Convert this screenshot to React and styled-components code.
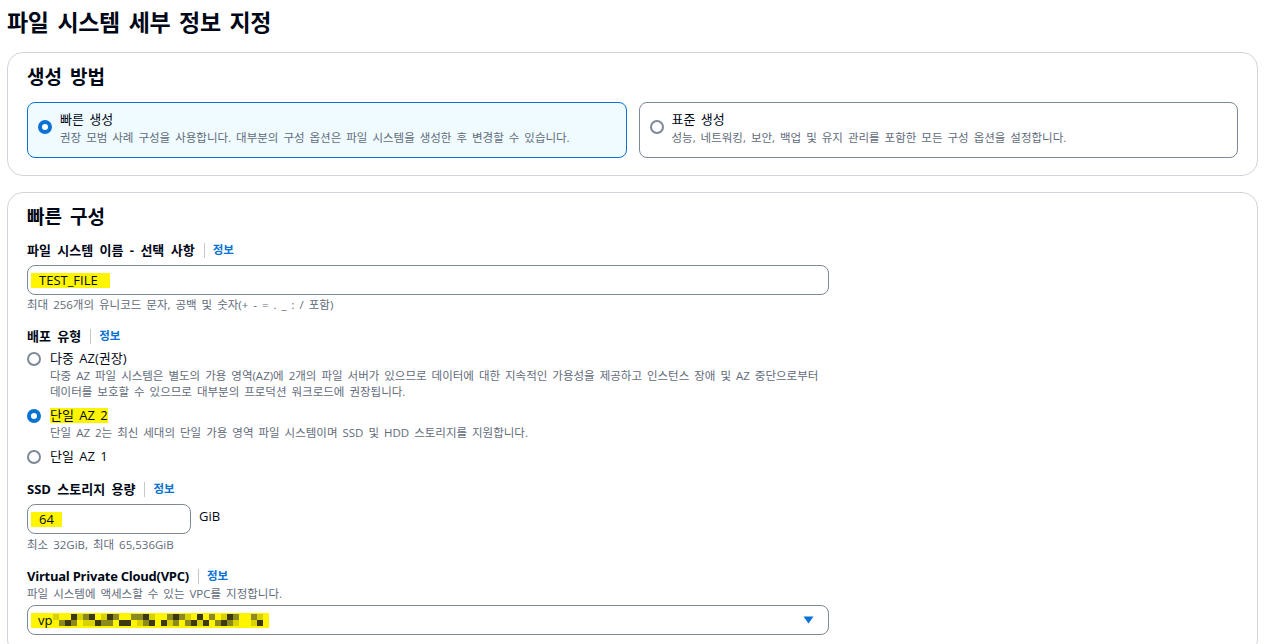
import React from 'react'
import styled, { createGlobalStyle } from 'styled-components'

const GlobalStyle = createGlobalStyle`
    body {
        margin: 0;
        background: #ffffff;
        font-family: "Open Sans", "Noto Sans CJK KR", sans-serif;
        color: #000716;
        word-spacing: 2px;
    }
`

const Page = styled.div`
    padding: 0 10px 0 7px;
    display: flex;
    flex-direction: column;
`

const Title = styled.h1`
    margin: 0;
    font-size: 23px;
    font-weight: 700;
    line-height: 28px;
    padding: 8px 0 16px 0;
    letter-spacing: -0.3px;
    word-spacing: 3px;
`

const Card = styled.section`
    border: 1px solid #d1d5db;
    border-radius: 16px;
    padding: ${({ $pad }) => $pad || '12px 19px 17px 19px'};
    margin-bottom: 16px;
    display: flex;
    flex-direction: column;
`

const CardHeading = styled.h2`
    margin: 0;
    font-size: 19px;
    font-weight: 700;
    line-height: 24px;
    word-spacing: 3px;
`

const TileRow = styled.div`
    display: grid;
    grid-template-columns: 1fr 1fr;
    gap: 12px;
    margin-top: 13px;
`

const Tile = styled.div`
    border: 1px solid ${({ $active }) => ($active ? '#0972d3' : '#7d8998')};
    background: ${({ $active }) => ($active ? '#f0fbff' : '#ffffff')};
    border-radius: 8px;
    padding: 6px 12px 11px 10px;
    display: flex;
    gap: 8px;
    align-items: flex-start;
`

const Radio = styled.span`
    flex: none;
    width: 14px;
    height: 14px;
    box-sizing: border-box;
    border-radius: 50%;
    margin-top: ${({ $top }) => $top || '4px'};
    border: ${({ $checked }) => ($checked ? '4px solid #0972d3' : '2px solid #7d8998')};
    background: #ffffff;
`

const OptionText = styled.div`
    display: flex;
    flex-direction: column;
`

const OptionLabel = styled.div`
    font-size: 13px;
    line-height: 20px;
`

const OptionDesc = styled.div`
    font-size: 11.5px;
    line-height: 16px;
    color: #5f6b7a;
    margin-top: ${({ $top }) => $top || '0'};
`

const Fields = styled.div`
    display: flex;
    flex-direction: column;
    gap: 13px;
    margin-top: 11px;
`

const Field = styled.div`
    display: flex;
    flex-direction: column;
`

const Label = styled.div`
    display: flex;
    align-items: center;
    font-size: 13px;
    font-weight: 700;
    line-height: 20px;
    word-spacing: ${({ $latin }) => ($latin ? '0' : '3px')};
    letter-spacing: ${({ $latin }) => ($latin ? '-0.25px' : '0')};
`

const InfoLink = styled.span`
    display: flex;
    align-items: center;
    color: #0972d3;
    font-size: 11.5px;
    font-weight: 700;
    letter-spacing: 0;
    &::before {
        content: '';
        width: 1px;
        height: 15px;
        background: #c6c6cd;
        margin: 0 8px 0 9px;
    }
`

const Hint = styled.div`
    font-size: 11.5px;
    line-height: 16px;
    color: #5f6b7a;
    margin-top: ${({ $top }) => $top || '0'};
`

const InputRow = styled.div`
    display: flex;
    align-items: flex-start;
    gap: 8px;
    margin-top: ${({ $top }) => $top || '5px'};
`

const InputBox = styled.div`
    box-sizing: border-box;
    width: ${({ $w }) => $w};
    height: 30px;
    border: 1px solid #7d8998;
    border-radius: 8px;
    display: flex;
    align-items: center;
    justify-content: space-between;
    padding: 0 14px 0 3px;
    font-size: 13px;
`

const Mark = styled.span`
    display: inline-flex;
    align-items: center;
    background: #fff500;
    line-height: 15px;
    padding: 0 ${({ $r }) => $r || '12px'} 0 ${({ $l }) => $l || '8px'};
`

const Mosaic = styled.span`
    display: inline-grid;
    grid-template-columns: repeat(36, 6px);
    grid-auto-rows: 6px;
    margin-left: 1px;
`

const Cell = styled.span`
    background: ${({ $tone }) => ['#fff500', '#d8d200', '#8d8a1d', '#3b3812'][$tone]};
`

const Unit = styled.span`
    font-size: 13px;
    line-height: 20px;
    padding-top: 2px;
`

const RadioGroup = styled.div`
    display: flex;
    flex-direction: column;
    gap: 5px;
    margin-top: 2px;
`

const RadioItem = styled.div`
    display: flex;
    gap: 9px;
    align-items: flex-start;
`

const Caret = () => (
    <svg width="11" height="8" viewBox="0 0 11 8">
        <path d="M0.5 0.5 L10.5 0.5 L5.5 7.5 Z" fill="#0972d3" />
    </svg>
)

// blurred-out vpc id, two rows of blocks
const mosaicRows = [
    '100312301320022310023210302013200210',
    '023201132203301230312023130232100130',
]

const App = () => {
    return (
        <Page>
            <GlobalStyle />
            <Title>파일 시스템 세부 정보 지정</Title>

            <Card>
                <CardHeading>생성 방법</CardHeading>
                <TileRow>
                    <Tile $active>
                        <Radio $checked $top="11px" />
                        <OptionText>
                            <OptionLabel>빠른 생성</OptionLabel>
                            <OptionDesc $top="1px">권장 모범 사례 구성을 사용합니다. 대부분의 구성 옵션은 파일 시스템을 생성한 후 변경할 수 있습니다.</OptionDesc>
                        </OptionText>
                    </Tile>
                    <Tile>
                        <Radio $top="11px" />
                        <OptionText>
                            <OptionLabel>표준 생성</OptionLabel>
                            <OptionDesc $top="1px">성능, 네트워킹, 보안, 백업 및 유지 관리를 포함한 모든 구성 옵션을 설정합니다.</OptionDesc>
                        </OptionText>
                    </Tile>
                </TileRow>
            </Card>

            <Card $pad="12px 19px 20px 19px">
                <CardHeading>빠른 구성</CardHeading>
                <Fields>
                    <Field>
                        <Label>파일 시스템 이름 - 선택 사항<InfoLink>정보</InfoLink></Label>
                        <InputRow>
                            <InputBox $w="802px"><Mark>TEST_FILE</Mark></InputBox>
                        </InputRow>
                        <Hint $top="2px">최대 256개의 유니코드 문자, 공백 및 숫자(+ - = . _ : / 포함)</Hint>
                    </Field>

                    <Field>
                        <Label>배포 유형<InfoLink>정보</InfoLink></Label>
                        <RadioGroup>
                            <RadioItem>
                                <Radio $top="4px" />
                                <OptionText>
                                    <OptionLabel>다중 AZ(권장)</OptionLabel>
                                    <OptionDesc>
                                        다중 AZ 파일 시스템은 별도의 가용 영역(AZ)에 2개의 파일 서버가 있으므로 데이터에 대한 지속적인 가용성을 제공하고 인스턴스 장애 및 AZ 중단으로부터
                                        <br />
                                        데이터를 보호할 수 있으므로 대부분의 프로덕션 워크로드에 권장됩니다.
                                    </OptionDesc>
                                </OptionText>
                            </RadioItem>
                            <RadioItem>
                                <Radio $checked $top="4px" />
                                <OptionText>
                                    <OptionLabel><Mark $l="0" $r="0">단일 AZ 2</Mark></OptionLabel>
                                    <OptionDesc>단일 AZ 2는 최신 세대의 단일 가용 영역 파일 시스템이며 SSD 및 HDD 스토리지를 지원합니다.</OptionDesc>
                                </OptionText>
                            </RadioItem>
                            <RadioItem>
                                <Radio $top="4px" />
                                <OptionText>
                                    <OptionLabel>단일 AZ 1</OptionLabel>
                                </OptionText>
                            </RadioItem>
                        </RadioGroup>
                    </Field>

                    <Field>
                        <Label>SSD 스토리지 용량<InfoLink>정보</InfoLink></Label>
                        <InputRow>
                            <InputBox $w="164px"><Mark $r="8px">64</Mark></InputBox>
                            <Unit>GiB</Unit>
                        </InputRow>
                        <Hint $top="3px">최소 32GiB, 최대 65,536GiB</Hint>
                    </Field>

                    <Field>
                        <Label $latin>Virtual Private Cloud(VPC)<InfoLink>정보</InfoLink></Label>
                        <Hint>파일 시스템에 액세스할 수 있는 VPC를 지정합니다.</Hint>
                        <InputRow $top="3px">
                            <InputBox $w="802px">
                                <Mark $l="7px" $r="0">
                                    vp
                                    <Mosaic>
                                        {mosaicRows.map((row, r) =>
                                            row.split('').map((t, i) => <Cell key={r + '-' + i} $tone={Number(t)} />)
                                        )}
                                    </Mosaic>
                                </Mark>
                                <Caret />
                            </InputBox>
                        </InputRow>
                    </Field>
                </Fields>
            </Card>
        </Page>
    )
}

export default App
